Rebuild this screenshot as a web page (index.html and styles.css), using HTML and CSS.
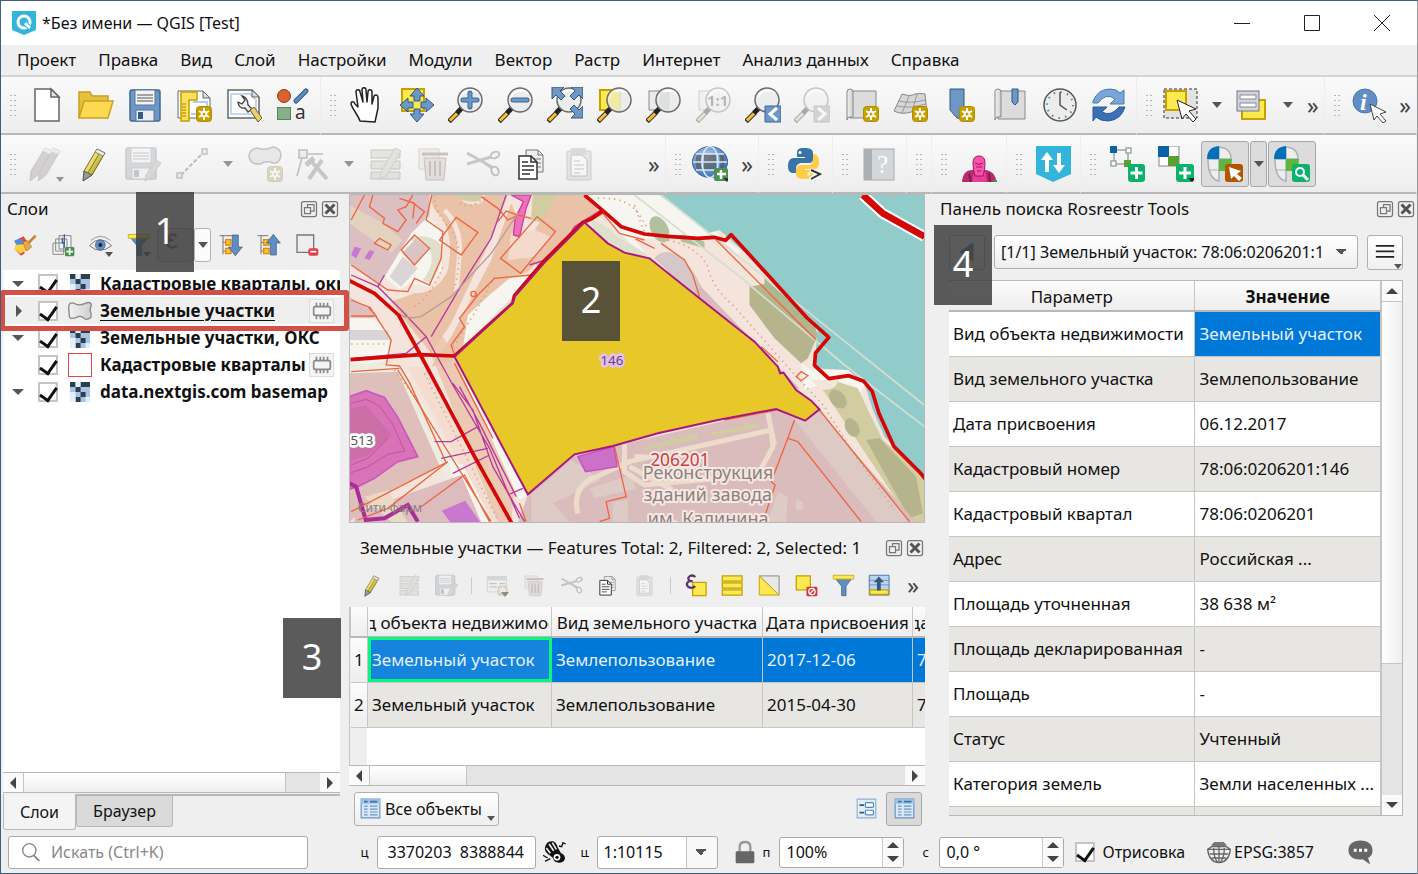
FILE: index.html
```html
<!DOCTYPE html>
<html lang="ru">
<head>
  <meta charset="UTF-8" />
  <meta name="viewport" content="width=device-width, initial-scale=1.0" />
  <title>*Без имени — QGIS [Test]</title>
  <link rel="stylesheet" href="styles.css">
</head>
<body>
  <!-- icon sprite, all icons are 36x36 -->
  <svg class="sprite" aria-hidden="true">
    <defs>
      <linearGradient id="g-pencil" x1="0" y1="0" x2="1" y2="1"><stop offset=".3" stop-color="#fcf08a"/><stop offset=".7" stop-color="#a89a20"/></linearGradient>
      <linearGradient id="g-gray" x1="0" y1="0" x2="1" y2="0"><stop offset="0" stop-color="#f2f2f2"/><stop offset="1" stop-color="#cfcfcf"/></linearGradient>
      <radialGradient id="g-globe" cx=".4" cy=".35" r=".7"><stop offset="0" stop-color="#b8d8f8"/><stop offset="1" stop-color="#2f68b0"/></radialGradient>
    </defs>
    <symbol id="star" viewBox="0 0 16 16"><rect x=".5" y=".5" width="15" height="15" rx="3" fill="#c8a000" stroke="#b08c00"/><path d="M8 2v12M3 5l10 6M13 5L3 11" stroke="#fff" stroke-width="2"/><circle cx="8" cy="8" r="3.3" fill="#fff"/><circle cx="8" cy="8" r="1.5" fill="#c8a000"/></symbol>
    <symbol id="lens" viewBox="0 0 36 36"><path d="M1 34.500L10 25.500" stroke="#333" stroke-width="5"/><path d="M2 33.500L9 26.500" stroke="#fbc02d" stroke-width="3"/><path d="M9 26L14 21" stroke="#222" stroke-width="5"/><circle cx="22" cy="13" r="12" fill="#e9ebeb" fill-opacity=".85" stroke="#6b6b6b" stroke-width="1.500"/><path d="M13 10c3-7 12-8 17-4" stroke="#fff" stroke-width="2" fill="none"/></symbol>
    <symbol id="new" viewBox="0 0 36 36"><path d="M6 2h16l8 8v24H6z" fill="#fff" stroke="#666" stroke-width="1.500"/><path d="M22 2v8h8z" fill="#e4e4e4" stroke="#666" stroke-width="1.500"/></symbol>
    <symbol id="open" viewBox="0 0 36 36"><path d="M1 31V5h11l2 4h16v6" fill="#e8c13c" stroke="#c8a020" stroke-width="1.500"/><path d="M1 31L6 14h29l-5 17z" fill="#fcd94e" stroke="#c8a020" stroke-width="1.500"/></symbol>
    <symbol id="save" viewBox="0 0 36 36"><rect x="3" y="3" width="30" height="31" rx="2" fill="#6d97c4" stroke="#3f6896" stroke-width="1.500"/><rect x="8" y="3" width="20" height="15" fill="#f3f3f3" stroke="#56779c"/><path d="M10 8h16M10 11h16M10 14h16" stroke="#555"/><rect x="9" y="23" width="18" height="11" fill="#eee" stroke="#56779c"/><rect x="11" y="25" width="5" height="7" fill="#355b88"/></symbol>
    <symbol id="layout" viewBox="0 0 36 36"><path d="M1 4h25l7 7v20H1z" fill="#fff" stroke="#666"/><path d="M26 4v7h7z" fill="#ddd" stroke="#666"/><path d="M16 15h14v12H14" fill="none" stroke="#b6cdea" stroke-width="2"/><path d="M4 5h16v8h-8v21H4z" fill="#fce060" stroke="#c4a000" stroke-width="1.500"/><path d="M5 17h4M5 20h4M5 23h4M5 26h4M5 29h4" stroke="#a08000"/><use href="#star" x="19" y="19" width="16" height="16"/></symbol>
    <symbol id="manager" viewBox="0 0 36 36"><path d="M2 3h24l7 7v21H2z" fill="#fff" stroke="#666" stroke-width="1.500"/><path d="M5 7h19l6 6v14H5z" fill="none" stroke="#c5d6f0" stroke-width="2"/><path d="M26 3v7h7z" fill="#ddd" stroke="#666"/><path d="M16 9l3 4-3 4-4-2c0 4 3 7 7 6l3 4 4-3-4-4c0-5-2-8-6-9z" fill="#eee" stroke="#444" stroke-width="1.300"/><path d="M24 23l4-3 8 11-4 4z" fill="#e8ce6e" stroke="#6e5c20"/></symbol>
    <symbol id="style" viewBox="0 0 36 36"><circle cx="9" cy="9" r="6.500" fill="#d9622f" stroke="#8f3e1a"/><path d="M21 14L31 4" stroke="#34587e" stroke-width="5" stroke-linecap="round"/><path d="M21 14L31 4" stroke="#5d8cc0" stroke-width="3" stroke-linecap="round"/><rect x="2.500" y="20.500" width="13" height="12" fill="#87b087" stroke="#5b825b"/><text x="20" y="32" font-size="19" fill="#333">a</text></symbol>
    <symbol id="hand" viewBox="0 0 36 36"><path d="M11 34c-2-6-7-11-9-17 0-3 3-3 4 0l3 3L7 5c0-3 4-3 4 0l3 10-1-12c0-3 4-3 4 0l1 12 1-10c0-3 4-3 4 0v12l2-8c2-2 4-1 4 2v10l-3 14z" fill="#fff" stroke="#222" stroke-width="1.500" stroke-linejoin="round"/></symbol>
    <symbol id="panto" viewBox="0 0 36 36"><path d="M3 2h22v22H3z" fill="#fce94f" stroke="#c4a000" stroke-width="2"/><path d="M18 1l7 8h-4v5h-6V9h-4zM18 35l7-8h-4v-5h-6v5h-4zM1 18l8-7v4h5v6H9v4zM35 18l-8-7v4h-5v6h5v4z" fill="#6d97c4" stroke="#33587f"/></symbol>
    <symbol id="zin" viewBox="0 0 36 36"><use href="#lens"/><path d="M22 6v14M15 13h14" stroke="#3d659a" stroke-width="5" stroke-linecap="round"/><path d="M22 6v14M15 13h14" stroke="#6d97c4" stroke-width="3" stroke-linecap="round"/></symbol>
    <symbol id="zout" viewBox="0 0 36 36"><use href="#lens"/><path d="M15 13h14" stroke="#3d659a" stroke-width="5" stroke-linecap="round"/><path d="M15 13h14" stroke="#6d97c4" stroke-width="3" stroke-linecap="round"/></symbol>
    <symbol id="zfull" viewBox="0 0 36 36"><use href="#lens"/><path d="M5 0h12l-4 4 5 5-4 4-5-5-4 4zM36 0H24l4 4-5 5 4 4 5-5 4 4zM36 31H24l4-4-5-5 4-4 5 5 4-4z" fill="#6d97c4" stroke="#33587f"/></symbol>
    <symbol id="zsel" viewBox="0 0 36 36"><path d="M3 3h20v20H3z" fill="#fce94f" stroke="#c4a000" stroke-width="2"/><use href="#lens"/><path d="M14 5h9v18q-9-1-10-9 0-6 1-9z" fill="#f5e98c" opacity=".7"/></symbol>
    <symbol id="zlay" viewBox="0 0 36 36"><path d="M3 4h20v19H3z" fill="#eaeaea" stroke="#8a8a8a"/><use href="#lens"/><path d="M14 5h9v17h-6q-5-4-4-10z" fill="#d5d8d2" opacity=".6"/></symbol>
    <symbol id="z11" viewBox="0 0 36 36"><path d="M3 4h20v19H3z" fill="#eaeaea" stroke="#8a8a8a"/><use href="#lens"/><text x="11" y="19" font-size="15" font-weight="bold" fill="#444">1:1</text></symbol>
    <symbol id="zlast" viewBox="0 0 36 36"><use href="#lens"/><path d="M20 19h16v16H20z" fill="#6d97c4" stroke="#3d659a"/><path d="M32 21l-7 6 7 6" stroke="#fff" stroke-width="3" fill="none"/></symbol>
    <symbol id="znext" viewBox="0 0 36 36"><use href="#lens"/><path d="M20 19h16v16H20z" fill="#999" stroke="#777"/><path d="M24 21l7 6-7 6" stroke="#fff" stroke-width="3" fill="none"/></symbol>
    <symbol id="mapview" viewBox="0 0 36 36"><path d="M6 4h26v27H6z" fill="#dcdcdc" stroke="#888"/><path d="M3 5q0-3 3-3 3 0 3 3v25H6q-3 0-3 3z" fill="url(#g-gray)" stroke="#888"/><use href="#star" x="19" y="19" width="16" height="16"/></symbol>
    <symbol id="map3d" viewBox="0 0 36 36"><path d="M9 7q9 3 13 0 5-1 10 0l2 20q-10-5-16-2Q9 28 1 24z" fill="#d6d6d6" stroke="#888"/><path d="M6 14q12 3 26-1M4 19q12 3 29-2M16 9L9 26M24 7l-5 18" stroke="#999" fill="none"/><use href="#star" x="19" y="19" width="16" height="16"/></symbol>
    <symbol id="mark" viewBox="0 0 36 36"><path d="M7 2h14v30l-7-1-7-8z" fill="#6d97c4" stroke="#33587f"/><use href="#star" x="16" y="19" width="16" height="16"/></symbol>
    <symbol id="marks" viewBox="0 0 36 36"><path d="M6 4h27v28H6z" fill="#dcdcdc" stroke="#888"/><path d="M3 4q0-2 3-2 3 0 3 3v25H6q-3 0-3 3z" fill="url(#g-gray)" stroke="#888"/><path d="M20 2h6v13l-3 3-3-3z" fill="#6d97c4" stroke="#33587f"/></symbol>
    <symbol id="clock" viewBox="0 0 36 36"><circle cx="18" cy="18" r="16" fill="#ececea" stroke="#555" stroke-width="1.500"/><circle cx="18" cy="18" r="13" fill="none" stroke="#4f7fb5" stroke-width="2" stroke-dasharray="1.500 5.300"/><path d="M18 5v13l7 5" stroke="#555" stroke-width="1.500" fill="none"/></symbol>
    <symbol id="refresh" viewBox="0 0 36 36"><path d="M2 14Q7 2 19 2q7 0 10 4l4-3v14H19l5-5q-9-7-17 4H2z" fill="#7aa5d8" stroke="#4a7ab0"/><path d="M34 20q-4 13-17 14-8 0-12-4l-3 4V20h14l-5 5q9 5 17-5z" fill="#3a70b8" stroke="#2b5a96"/></symbol>
    <symbol id="select" viewBox="0 0 36 36"><path d="M1 2h33v29H1z" fill="#e2e2e2" stroke="#333" stroke-dasharray="3 2"/><path d="M3 4h20v19H3z" fill="#fce94f" stroke="#c4a000" stroke-width="2"/><path d="M14 13l5 19 4-5 7 8 3-3-7-8 7-2z" fill="#fff" stroke="#222"/></symbol>
    <symbol id="form" viewBox="0 0 36 36"><path d="M8 13h23v19H8z" fill="#fce94f" stroke="#c4a000" stroke-width="2"/><rect x="3" y="4" width="22" height="20" fill="#cfd5da" stroke="#778"/><path d="M6 8h16v4H6zM6 16h16v4H6z" fill="#fff" stroke="#889"/></symbol>
    <symbol id="info" viewBox="0 0 36 36"><circle cx="14" cy="14" r="12" fill="#5f8dc4" stroke="#4a78ae"/><text x="9" y="23" font-size="24" font-family="Liberation Serif, serif" font-style="italic" font-weight="bold" fill="#fff">i</text><path d="M19 17l4 16 3-4 6 7 3-2-6-7 6-2z" fill="#fff" stroke="#444"/></symbol>
    <symbol id="pencil" viewBox="0 0 36 36"><path d="M7 25L20 3l8 4-13 22-8 5z" fill="url(#g-pencil)" stroke="#6e6820"/><path d="M20 3l8 4-2 3-8-4z" fill="#eee" stroke="#888"/><path d="M7 25l8 4-9 6z" fill="#999" stroke="#555"/><path d="M22 8L11 27" stroke="#877d1a"/></symbol>
    <symbol id="pencils" viewBox="0 0 36 36"><path d="M3 25L17 2l7 3-14 24-8 6zM12 25L25 2l7 3-14 24-8 6z" fill="#a08f8a" stroke="#777"/><path d="M17 2l7 3-2 3-7-3zM25 2l7 3-2 3-7-3z" fill="#ddd"/></symbol>
    <symbol id="savee" viewBox="0 0 36 36"><g opacity=".8"><use href="#save" x="-2" y="-1"/></g><path d="M21 29l10-15 5 3-10 15-6 3z" fill="#b6a09a" stroke="#888"/></symbol>
    <symbol id="line" viewBox="0 0 36 36"><path d="M7 29L29 7" stroke="#555" stroke-width="2" stroke-dasharray="4 2"/><path d="M3 27h5v5H3zM28 3h5v5h-5z" fill="#ddd" stroke="#666" stroke-width="1.500"/></symbol>
    <symbol id="poly" viewBox="0 0 36 36"><path d="M2 11q0-8 8-9 7 3 16-1 8 1 8 9-2 8-8 7-6-3-13 1-9 1-11-7z" fill="#ccd0cc" stroke="#666" stroke-width="1.500"/><use href="#star" x="20" y="20" width="16" height="16"/></symbol>
    <symbol id="vertex" viewBox="0 0 36 36"><path d="M8 8h20M8 8L2 30" stroke="#555" stroke-width="1.500"/><path d="M4 4h8v8H4z" fill="#ddd" stroke="#555" stroke-width="1.500"/><path d="M14 33l13-19M16 15l16 18" stroke="#777" stroke-width="4"/><path d="M11 19l8-7" stroke="#777" stroke-width="5"/></symbol>
    <symbol id="tabedit" viewBox="0 0 36 36"><path d="M3 4h29v8H3zM3 15h29v8H3zM3 26h29v7H3z" fill="#c8c8a8" stroke="#77775a"/><path d="M13 26L27 2l6 3-14 24-7 4z" fill="#cdbdb8" stroke="#888"/></symbol>
    <symbol id="trash" viewBox="0 0 36 36"><path d="M3 3h20v20H3z" fill="#ddddc0" stroke="#99997a"/><path d="M8 12h22l-2 22H10z" fill="#e0b0b0" stroke="#a05858"/><path d="M6 8h26" stroke="#a05858" stroke-width="3"/><path d="M14 15v15M19 15v15M24 15v15" stroke="#a05858" stroke-width="2"/></symbol>
    <symbol id="cut" viewBox="0 0 36 36"><path d="M2 7l25 14M2 18l24-7" stroke="#777" stroke-width="3"/><path d="M17 15l10 8" stroke="#777" stroke-width="2"/><ellipse cx="30" cy="9" rx="4.500" ry="3" transform="rotate(-25 30 9)" fill="none" stroke="#8a5a5a" stroke-width="2"/><ellipse cx="30" cy="25" rx="3.500" ry="4.500" transform="rotate(-25 30 25)" fill="none" stroke="#8a5a5a" stroke-width="2"/></symbol>
    <symbol id="copy" viewBox="0 0 36 36"><path d="M13 4h12l5 5v17H13z" fill="#eee" stroke="#777"/><path d="M25 4v5h5" fill="none" stroke="#777"/><path d="M21 13h7M21 17h7M21 21h7" stroke="#777"/><path d="M6 10h12l6 6v17H6z" fill="#fff" stroke="#333" stroke-width="1.500"/><path d="M18 10v6h6" fill="none" stroke="#333" stroke-width="1.500"/><path d="M9 16h6M9 20h12M9 24h12M9 28h8" stroke="#333" stroke-width="1.300"/></symbol>
    <symbol id="paste" viewBox="0 0 36 36"><rect x="6" y="5" width="24" height="29" rx="1" fill="#cfc8b8" stroke="#888"/><rect x="10" y="2" width="15" height="6" fill="#aaa"/><path d="M10 9h11l5 5v16H10z" fill="#fff" stroke="#666"/><path d="M13 15h6M13 19h10M13 23h10M13 27h6" stroke="#777"/></symbol>
    <symbol id="globe" viewBox="0 0 36 36"><ellipse cx="18" cy="16" rx="17.500" ry="15.500" fill="url(#g-globe)" stroke="#3465a4"/><path d="M5 8q-3 8 0 16h5q-2-8 0-16zM12 8v16h12V8zM27 8q3 8 0 16h4q3-8 0-16z" fill="#555" opacity=".7"/><path d="M1 16h34M4 8h28M4 24h28" stroke="#dde8f5" stroke-width="1.500"/><ellipse cx="18" cy="16" rx="8" ry="15.500" fill="none" stroke="#dde8f5" stroke-width="1.500"/><rect x="22" y="22" width="14" height="13" rx="2" fill="#4d9152"/><path d="M29 24v9M25 28h9" stroke="#fff" stroke-width="2.500"/><path d="M31 32h7l-3 4z" fill="#333"/></symbol>
    <symbol id="python" viewBox="0 0 36 36"><path d="M17 2c-6 0-7 2-7 5v4h8v1H7c-4 0-6 3-6 8s2 7 5 7h3v-5c0-3 3-5 6-5h7c3 0 4-2 4-4V7c0-4-4-5-9-5z" fill="#3874a8"/><path d="M18 33c6 0 8-2 8-5v-4h-8v-1h9c4 0 5-3 5-7 0-5-2-8-5-8h-1v6c0 3-2 5-5 5h-7c-3 0-5 2-5 5v4c0 4 3 5 9 5z" fill="#fdce45"/><circle cx="13" cy="6.500" r="1.500" fill="#fff"/><circle cx="22" cy="28" r="1.500" fill="#fff"/><path d="M23 24l9 4-9 5" stroke="#fff" stroke-width="4" fill="none"/><path d="M24 24l9 4-9 5" stroke="#333" stroke-width="2" fill="none"/></symbol>
    <symbol id="help" viewBox="0 0 36 36"><rect x="3" y="3" width="30" height="31" fill="#d3d7da" stroke="#aaa"/><rect x="3" y="3" width="8" height="31" fill="#aab0b4"/><text x="16" y="27" font-size="25" font-family="Liberation Serif, serif" fill="#fff">?</text></symbol>
    <symbol id="pink" viewBox="0 0 36 36"><path d="M1 36q1-12 10-12h14q10 2 10 12z" fill="#b82a70"/><path d="M11 36l2-12h11l2 12z" fill="#e53d98"/><path d="M12 17q0-7 6-7t6 7q0 7-2 13h-8q-2-6-2-13z" fill="#ff4fae" stroke="#8d2158"/><path d="M14 17q4 3 8 0M15 21h6M16 25h4" stroke="#8d2158" fill="none"/><path d="M8 28l2 8M28 27l1 9" stroke="#7a1c4c" stroke-width="2"/><path d="M32 34h4v2h-4z" fill="#30a030"/></symbol>
    <symbol id="ngsync" viewBox="0 0 36 36"><path d="M1 0h35v28l-18 8-17-8z" fill="#33b5db"/><path d="M12 26V9M24 7v17" stroke="#fff" stroke-width="4"/><path d="M6 14l6-8 6 8zM18 19l6 8 6-8z" fill="#fff"/></symbol>
    <symbol id="addvec" viewBox="0 0 36 36"><path d="M5 4h14v14H5z" fill="none" stroke="#9aa6aa" stroke-width="1.500"/><path d="M17 2h5v5h-5zM2 15h5v5H2z" fill="#fff" stroke="#9aa6aa" stroke-width="1.500"/><path d="M1 0h7v7H1z" fill="#0b62a4"/><path d="M15 14h7v7h-7z" fill="#56a132"/><rect x="19" y="18" width="17" height="18" rx="3" fill="#0cb26b"/><path d="M27.500 21v12M21.500 27h12" stroke="#fff" stroke-width="3"/></symbol>
    <symbol id="addras" viewBox="0 0 36 36"><path d="M1 0h20v20H1z" fill="#fff" stroke="#a8b0b3" stroke-width="1.500"/><path d="M0 0h11v11H0z" fill="#0b62a4"/><path d="M10 10h11v10H10z" fill="#56a132"/><rect x="18" y="18" width="18" height="18" rx="3" fill="#0cb26b"/><path d="M27 21v12M21 27h12" stroke="#fff" stroke-width="3"/><path d="M30 32h8l-4 4z" fill="#222"/></symbol>
    <symbol id="pie" viewBox="0 0 36 36"><path d="M12 13V1q12 1 12 12zM12 13v22Q1 33 1 13z" fill="#eee" stroke="#a8b3b6" stroke-width="1.500"/><path d="M1 24h11" stroke="#a8b3b6"/><path d="M12 0v13H0Q0 1 12 0z" fill="#0070b8"/><path d="M12 13h13q0 8-5 12h-8z" fill="#5cb83c"/></symbol>
    <symbol id="idpie" viewBox="0 0 36 36"><use href="#pie"/><rect x="18" y="18" width="18" height="18" rx="3" fill="#b25400"/><path d="M22 21l2 12 3-3 5 5 3-3-5-4 4-3z" fill="#fff"/></symbol>
    <symbol id="spie" viewBox="0 0 36 36"><use href="#pie"/><rect x="18" y="18" width="18" height="18" rx="3" fill="#0cb26b"/><circle cx="26" cy="26" r="4" fill="none" stroke="#fff" stroke-width="2"/><path d="M29 29l5 5" stroke="#fff" stroke-width="3"/></symbol>
    <symbol id="brush" viewBox="0 0 36 36"><path d="M2 12l14-7 10 16-13 9z" fill="#e8443c"/><path d="M2 24l8-4 8 10-6 4z" fill="#e8443c"/><path d="M2 12l8-4 8 6-12 6z" fill="#4d8ce0"/><path d="M3 18l18-2 4 7-14 8-8-6z" fill="#fbd23c"/><path d="M15 14l6-3 7 10-8 6z" fill="#e8a84c" stroke="#a86c20"/><path d="M23 15L34 4" stroke="#c98530" stroke-width="4"/></symbol>
    <symbol id="addgrp" viewBox="0 0 36 36"><path d="M3 15h16v17H3zM7 9h17v18H7zM12 4h18v20H12z" fill="#f2f2f2" stroke="#888" stroke-width="1.500"/><path d="M20 10v12M20 2v10q0 3-3 3v-8" stroke="#3c6898" stroke-width="2" fill="none"/><rect x="21" y="21" width="14" height="14" rx="2" fill="#4d9152"/><path d="M28 23v10M23 28h10" stroke="#fff" stroke-width="2.500"/></symbol>
    <symbol id="eye" viewBox="0 0 36 36"><path d="M1 19Q16 1 34 19 16 33 1 19z" fill="#f2f2f2" stroke="#777" stroke-width="1.500"/><circle cx="17" cy="18" r="7.500" fill="#5f8dc4" stroke="#3a628c"/><circle cx="17" cy="18" r="3" fill="#222"/><path d="M3 11Q17-1 32 11" stroke="#999" fill="none" stroke-width="1.500"/></symbol>
    <symbol id="filter" viewBox="0 0 36 36"><path d="M2 3h32L22 19v15h-7V19z" fill="#5f8dc4" stroke="#34587e"/><path d="M2 2h32v6H2z" fill="#fce94f" stroke="#c4a000"/></symbol>
    <symbol id="expand" viewBox="0 0 36 36"><path d="M1 4h24M6 4v28M6 14h4M6 27h4" stroke="#777" stroke-width="1.500" fill="none"/><path d="M10 10h8v8h-8zM10 23h8v8h-8z" fill="#fbc02d" stroke="#e08a10" stroke-width="2"/><path d="M20 3h9v18h6L24.500 34 14 21h6z" fill="#5f8dc4" stroke="#34587e"/></symbol>
    <symbol id="collapse" viewBox="0 0 36 36"><path d="M1 4h16M6 4v28M6 14h4M6 27h4" stroke="#777" stroke-width="1.500" fill="none"/><path d="M10 10h8v8h-8zM10 23h8v8h-8z" fill="#fbc02d" stroke="#e08a10" stroke-width="2"/><path d="M20 33h9V15h6L24.500 2 14 15h6z" fill="#5f8dc4" stroke="#34587e"/></symbol>
    <symbol id="remove" viewBox="0 0 36 36"><path d="M3 3h25v26H3z" fill="#eee" stroke="#777" stroke-width="2"/><rect x="20" y="23" width="15" height="11" rx="3" fill="#e8404a"/><path d="M23 28h9" stroke="#fff" stroke-width="2.500"/></symbol>
    <symbol id="tabadd" viewBox="0 0 36 36"><path d="M2 4h30v24H2z" fill="#eee" stroke="#777"/><path d="M2 4h30v6H2z" fill="#9aa"/><path d="M5 15h12M5 20h12M21 15h9" stroke="#777" stroke-width="2"/><use href="#star" x="18" y="18" width="16" height="16"/></symbol>
    <symbol id="eps" viewBox="0 0 36 36"><path d="M12 13h21v21H12z" fill="#fce94f" stroke="#c4a000" stroke-width="2"/><path d="M16 5q-3-4-8-2-6 4 0 8h4-5q-7 4-2 9 6 4 11-1" fill="none" stroke="#5c3566" stroke-width="3.500"/></symbol>
    <symbol id="epsf" viewBox="0 0 36 36"><path d="M20 5q-4-4-9-2-6 4 1 8h4-5q-8 4-2 9 6 4 12-1" fill="none" stroke="#8c4a96" stroke-width="3.500"/><path d="M22 22h13v13h-4v-8h-5v8h-4z" fill="#ddd"/></symbol>
    <symbol id="selall" viewBox="0 0 36 36"><path d="M2 3h31v8H2zM2 14h31v8H2zM2 25h31v8H2z" fill="#fce94f" stroke="#c4a000" stroke-width="2"/></symbol>
    <symbol id="invert" viewBox="0 0 36 36"><path d="M2 3h31v30z" fill="#e8e8e8" stroke="#888" stroke-width="1.500"/><path d="M2 3v30h31z" fill="#fce94f" stroke="#c4a000" stroke-width="1.500"/></symbol>
    <symbol id="desel" viewBox="0 0 36 36"><path d="M2 3h22v22H2z" fill="#fce94f" stroke="#c4a000" stroke-width="2"/><rect x="18" y="20" width="17" height="15" rx="2" fill="#d8323a"/><circle cx="26.500" cy="27.500" r="5" fill="none" stroke="#fff" stroke-width="2"/><path d="M23 31l7-7" stroke="#fff" stroke-width="2"/></symbol>
    <symbol id="totop" viewBox="0 0 36 36"><path d="M2 2h31v31H2z" fill="#b9d4ee" stroke="#4a78ae" stroke-width="1.500"/><path d="M2 10h31M2 17h31" stroke="#4a78ae"/><path d="M3 25h29v7H3z" fill="#fce94f" stroke="#c4a000" stroke-width="2"/><path d="M17 4l8 9h-5v13h-6V13H9z" fill="#34587e"/></symbol>
    <symbol id="table" viewBox="0 0 36 36"><path d="M2 2h32v32H2z" fill="#d8e8f6" stroke="#6595c5" stroke-width="2"/><path d="M2 2h32v8H2z" fill="#9cc6e8"/><path d="M7 6h6M17 6h13" stroke="#446fa0" stroke-width="3"/><path d="M7 14h6M17 14h13M7 19h6M17 19h13M7 24h6M17 24h13M7 29h6M17 29h13" stroke="#6595c5" stroke-width="2"/></symbol>
    <symbol id="formv" viewBox="0 0 36 36"><path d="M2 2h32v32H2z" fill="#e4ecf4" stroke="#8fb0d4" stroke-width="2"/><path d="M6 12h8M6 25h8" stroke="#345878" stroke-width="3"/><rect x="16" y="8" width="14" height="8" rx="2" fill="#fff" stroke="#4a88c8" stroke-width="2"/><rect x="16" y="21" width="14" height="8" rx="2" fill="#fff" stroke="#4a88c8" stroke-width="2"/></symbol>
    <symbol id="float" viewBox="0 0 36 36"><rect x="3" y="3" width="30" height="30" rx="4" fill="none" stroke="#777" stroke-width="2.500"/><path d="M15 9h13v13H15z" fill="none" stroke="#777" stroke-width="2.500"/><path d="M9 15h12v12H9z" fill="#efefef" stroke="#777" stroke-width="2.500"/></symbol>
    <symbol id="close" viewBox="0 0 36 36"><rect x="3" y="3" width="30" height="30" rx="4" fill="none" stroke="#777" stroke-width="2.500"/><path d="M9 9l18 18M27 9L9 27" stroke="#555" stroke-width="6"/></symbol>
    <symbol id="checker" viewBox="0 0 36 36"><path d="M0 0h36v36H0z" fill="#a9c4e2"/><path d="M0 0h10v9H0zM19 0h17v9H19zM10 9h9v9h-9zM19 18h9v9h-9zM10 27h9v9h-9z" fill="#2c3e50"/><path d="M10 0h9v9h-9zM0 18h10v18H0zM28 27h8v9h-8z" fill="#e4eef8"/></symbol>
    <symbol id="shape" viewBox="0 0 36 36"><path d="M1 13Q1 5 8 6q8 5 17 1 8-4 10 1-1 5-2 9 3 7 1 11-7 5-11 0-5-4-11 0Q3 31 2 26z" fill="url(#g-gray)" stroke="#888" stroke-width="2"/></symbol>
    <symbol id="chip" viewBox="0 0 36 36"><rect x="3" y="10" width="30" height="16" rx="3" fill="#f4f4f4" stroke="#888" stroke-width="3"/><path d="M8 9V3M15 9V3M21 9V3M28 9V3M8 27v6M15 27v6M21 27v6M28 27v6" stroke="#888" stroke-width="3"/></symbol>
    <symbol id="search" viewBox="0 0 36 36"><circle cx="15" cy="15" r="12" fill="none" stroke="#888" stroke-width="2.500"/><path d="M23 24l10 10" stroke="#888" stroke-width="3.500"/></symbol>
    <symbol id="bug" viewBox="0 0 36 36"><path d="M4 8q3-7 11-6 5 2 7 9l5 9q6 2 6 8-2 6-9 6-8 0-9-7L6 20Q1 15 4 8z" fill="#111"/><path d="M9 6l7 10M14 4l6 10M5 12l6 8" stroke="#eee" stroke-width="2.500"/><circle cx="21" cy="26" r="5" fill="#fff"/><circle cx="21" cy="26" r="2.500" fill="#111"/><path d="M0 23l7 4M24 9l4 1 2-6 4 2M3 32l8-4" stroke="#111" stroke-width="2" fill="none"/></symbol>
    <symbol id="lock" viewBox="0 0 36 36"><path d="M10 18v-8q0-7 8-7t8 7v8" fill="none" stroke="#999" stroke-width="3.500"/><rect x="4" y="17" width="28" height="18" rx="2" fill="#666"/></symbol>
    <symbol id="crs" viewBox="0 0 36 36"><path d="M11 3h14l5 5q-12 6-24 0z" fill="#777"/><path d="M1 14h34Q33 33 18 34 3 33 1 14zM1 14l6-4h22l6 4" fill="none" stroke="#666" stroke-width="2"/><path d="M4 21h28M7 27h22M18 10v24M10 12q0 14 6 22M26 12q0 14-6 22" stroke="#666" stroke-width="2" fill="none"/></symbol>
    <symbol id="bubble" viewBox="0 0 36 36"><path d="M18 2c10 0 16 5 16 13 0 6-3 9-6 10l3 9-10-7C9 29 2 23 2 15 2 7 8 2 18 2z" fill="#666"/><path d="M9 13h4v4H9zM16 13h4v4h-4zM23 13h4v4h-4z" fill="#fff"/></symbol>
    <symbol id="burger" viewBox="0 0 36 36"><path d="M3 8h30M3 17h30M3 26h30" stroke="#222" stroke-width="3"/></symbol>
    <symbol id="back" viewBox="0 0 36 36"><path d="M28 3v30L6 18z" fill="#5f7fa8" stroke="#34587e"/></symbol>
  </svg>

  <div class="window">
    <header class="titlebar">
      <svg class="logo" viewBox="0 0 24 24"><path d="M0 0h24v19l-12 5-12-5z" fill="#33b5db"/><circle cx="12" cy="11" r="6" fill="none" stroke="#fff" stroke-width="3"/><path d="M12 11l7 7" stroke="#33b5db" stroke-width="5"/><path d="M13 12l5 5" stroke="#fff" stroke-width="3"/></svg>
      <h1>*Без имени — QGIS [Test]</h1>
      <div class="win-buttons">
        <button aria-label="Свернуть"><svg viewBox="0 0 16 16"><path d="M0 8.500h16"/></svg></button>
        <button aria-label="Развернуть"><svg viewBox="0 0 16 16"><path d="M.5.5h15v15H.5z"/></svg></button>
        <button aria-label="Закрыть"><svg viewBox="0 0 16 16"><path d="M0 0l16 16M16 0L0 16"/></svg></button>
      </div>
    </header>

    <nav class="menu">
      <button>Проект</button><button>Правка</button><button>Вид</button><button>Слой</button><button>Настройки</button><button>Модули</button><button>Вектор</button><button>Растр</button><button>Интернет</button><button>Анализ данных</button><button>Справка</button>
    </nav>

    <div class="toolbar first">
      <div class="group">
        <i class="grip"></i>
        <button aria-label="Создать"><svg><use href="#new"/></svg></button>
        <button aria-label="Открыть"><svg><use href="#open"/></svg></button>
        <button aria-label="Сохранить"><svg><use href="#save"/></svg></button>
        <button aria-label="Новый макет"><svg><use href="#layout"/></svg></button>
        <button aria-label="Менеджер макетов"><svg><use href="#manager"/></svg></button>
        <button aria-label="Стили"><svg><use href="#style"/></svg></button>
      </div>
      <div class="group">
        <i class="grip"></i>
        <button aria-label="Прокрутка"><svg><use href="#hand"/></svg></button>
        <button aria-label="К выделению"><svg><use href="#panto"/></svg></button>
        <button aria-label="Увеличить"><svg><use href="#zin"/></svg></button>
        <button aria-label="Уменьшить"><svg><use href="#zout"/></svg></button>
        <button aria-label="Полный охват"><svg><use href="#zfull"/></svg></button>
        <button aria-label="Увеличить до выделения"><svg><use href="#zsel"/></svg></button>
        <button aria-label="Увеличить до слоя"><svg><use href="#zlay"/></svg></button>
        <button aria-label="Фактический размер" disabled><svg><use href="#z11"/></svg></button>
        <button aria-label="Предыдущий охват"><svg><use href="#zlast"/></svg></button>
        <button aria-label="Следующий охват" disabled><svg><use href="#znext"/></svg></button>
        <button aria-label="Новый вид карты"><svg><use href="#mapview"/></svg></button>
        <button aria-label="Новый 3D вид"><svg><use href="#map3d"/></svg></button>
        <button aria-label="Новая закладка"><svg><use href="#mark"/></svg></button>
        <button aria-label="Закладки"><svg><use href="#marks"/></svg></button>
        <button aria-label="Время"><svg><use href="#clock"/></svg></button>
        <button aria-label="Обновить"><svg><use href="#refresh"/></svg></button>
      </div>
      <div class="group tight">
        <i class="grip"></i>
        <button aria-label="Выделить"><svg><use href="#select"/></svg></button>
        <button class="drop" aria-label="Ещё"></button>
        <button aria-label="Выделить по значению"><svg><use href="#form"/></svg></button>
        <button class="drop" aria-label="Ещё"></button>
        <button class="more">»</button>
      </div>
      <div class="group tight">
        <i class="grip"></i>
        <button aria-label="Определить"><svg><use href="#info"/></svg></button>
        <button class="more">»</button>
      </div>
    </div>

    <div class="toolbar second">
      <div class="group tight">
        <i class="grip"></i>
        <button class="has-arrow off" aria-label="Текущие правки"><svg><use href="#pencils"/></svg></button>
        <button aria-label="Режим редактирования"><svg><use href="#pencil"/></svg></button>
        <button aria-label="Сохранить правки" disabled><svg><use href="#savee"/></svg></button>
        <button aria-label="Оцифровка" disabled><svg><use href="#line"/></svg></button>
        <button class="drop" aria-label="Ещё" disabled></button>
        <button aria-label="Добавить полигон" disabled><svg><use href="#poly"/></svg></button>
        <button aria-label="Вершины" disabled><svg><use href="#vertex"/></svg></button>
        <button class="drop" aria-label="Ещё" disabled></button>
        <button aria-label="Изменить атрибуты" disabled><svg><use href="#tabedit"/></svg></button>
        <button aria-label="Удалить" disabled><svg><use href="#trash"/></svg></button>
        <button aria-label="Вырезать" disabled><svg><use href="#cut"/></svg></button>
        <button aria-label="Копировать"><svg><use href="#copy"/></svg></button>
        <button aria-label="Вставить" disabled><svg><use href="#paste"/></svg></button>
        <button class="more last">»</button>
      </div>
      <div class="group tight">
        <i class="grip"></i>
        <button aria-label="Добавить слой"><svg><use href="#globe"/></svg></button>
        <button class="more">»</button>
      </div>
      <div class="group">
        <i class="grip"></i>
        <button aria-label="Консоль Python"><svg><use href="#python"/></svg></button>
      </div>
      <div class="group">
        <i class="grip"></i>
        <button aria-label="Справка"><svg><use href="#help"/></svg></button>
      </div>
      <div class="group tight"><i class="grip"></i></div>
      <div class="group">
        <i class="grip"></i>
        <button aria-label="Модуль"><svg><use href="#pink"/></svg></button>
      </div>
      <div class="group">
        <i class="grip"></i>
        <button aria-label="NextGIS Connect"><svg><use href="#ngsync"/></svg></button>
      </div>
      <div class="group g-ros">
        <i class="grip"></i>
        <button aria-label="Добавить вектор"><svg><use href="#addvec"/></svg></button>
        <button aria-label="Добавить растр"><svg><use href="#addras"/></svg></button>
        <div class="pressed-set">
          <button class="pressed" aria-label="Идентификация"><svg><use href="#idpie"/></svg></button>
          <button class="pressed drop" aria-label="Ещё"></button>
          <button class="pressed" aria-label="Поиск"><svg><use href="#spie"/></svg></button>
        </div>
      </div>
    </div>

    <main class="main">
      <section class="dock layers">
        <div class="dock-title"><h2>Слои</h2><button aria-label="Открепить"><svg><use href="#float"/></svg></button><button aria-label="Закрыть панель"><svg><use href="#close"/></svg></button></div>
        <div class="layer-tools">
          <button aria-label="Стиль"><svg><use href="#brush"/></svg></button>
          <button aria-label="Добавить группу"><svg><use href="#addgrp"/></svg></button>
          <button class="has-arrow" aria-label="Видимость"><svg><use href="#eye"/></svg></button>
          <button class="has-arrow" aria-label="Фильтр"><svg><use href="#filter"/></svg></button>
          <div class="split"><button aria-label="Фильтр по выражению"><svg><use href="#epsf"/></svg></button><button class="drop" aria-label="Ещё"></button></div>
          <button aria-label="Развернуть всё"><svg><use href="#expand"/></svg></button>
          <button aria-label="Свернуть всё"><svg><use href="#collapse"/></svg></button>
          <button aria-label="Удалить слой"><svg><use href="#remove"/></svg></button>
        </div>
        <div class="tree">
          <div class="node"><i class="tri down"></i><input type="checkbox" id="l1" checked><svg class="thumb"><use href="#checker"/></svg><label for="l1">Кадастровые кварталы, округа</label></div>
          <div class="node current"><i class="tri right"></i><input type="checkbox" id="l2" checked><svg class="thumb wide"><use href="#shape"/></svg><label for="l2">Земельные участки</label><button class="mem" aria-label="Временный слой"><svg><use href="#chip"/></svg></button></div>
          <div class="node"><i class="tri down"></i><input type="checkbox" id="l3" checked><svg class="thumb"><use href="#checker"/></svg><label for="l3">Земельные участки, ОКС</label></div>
          <div class="node"><i class="tri"></i><input type="checkbox" id="l4" checked><span class="thumb outline"></span><label for="l4">Кадастровые кварталы</label><button class="mem" aria-label="Временный слой"><svg><use href="#chip"/></svg></button></div>
          <div class="node"><i class="tri down"></i><input type="checkbox" id="l5" checked><svg class="thumb"><use href="#checker"/></svg><label for="l5">data.nextgis.com basemap</label></div>
        </div>
        <div class="hscroll"><button class="arrow left" aria-label="Влево"></button><div class="bar wide-bar"></div><div class="track"></div><button class="arrow right" aria-label="Вправо"></button></div>
        <div class="tabs"><button class="active">Слои</button><button>Браузер</button></div>
        <div class="highlight"></div>
        <div class="badge b1">1</div>
        <div class="badge b3">3</div>
      </section>

      <section class="center">
        <div class="map">
          <svg viewBox="15 15 1725 981" preserveAspectRatio="xMidYMid slice">
            <rect x="0" y="0" width="1760" height="1010" fill="#f5e4dc"/>
            <!-- land use -->
            <path d="M15 15h240v60L150 230l-50 50-85-60z" fill="#dbbfc1"/>
            <path d="M15 45l100 55 60 50-35 40-125-90z" fill="#e4d2c0"/>
            <path d="M250 80l50 50-10 110-35 50-60-10-30 20-45-40 80-130z" fill="#f6f5ef"/>
            <path d="M200 140q90-10 95 50-5 50-40 90l-20-10q40-50 20-90-15-25-60-30z" fill="#e0dfcb"/>
            <path d="M215 145l38 30-45 50-35-35z" fill="#dbc5c2"/>
            <path d="M175 200l45 35-50 55-35-30z" fill="#dbd5d6"/>
            <path d="M15 330l115 90 10 90-125 20z" fill="#f6f5ef"/>
            <path d="M15 320l80 50-10 15-70-2z" fill="#ddc0bd"/>
            <path d="M15 420h115l10 30H15z" fill="#d8d5d6"/>
            <path d="M15 545h145l150 270-200 100-95 80z" fill="#dfbfb9"/>
            <path d="M15 520l155 5 270 471H360L160 545l-145 5z" fill="#edece1"/>
            <path d="M190 530h60l220 466h-30z" fill="#f4ddd0"/>
            <path d="M310 810l45 15 90 170h-75z" fill="#f6f5ef"/>
            <path d="M30 970l320-115 60 141H30z" fill="#dcbcbc"/>
            <path d="M60 920l70-20 60 96h-50z" fill="#ead9c4"/>
            <path d="M260 15h90q0 30 40 28 30 0 30-28h70l-50 130-120 255-60 90-60-75-60-80 70-25q70 0 100-70 20-100-20-160-35-30-30-65z" fill="#eac2a8"/>
            <path d="M235 430l60 10 40 60 175 400-10 96h-40z" fill="#eac2a8" opacity=".8"/>
            <path d="M330 505l25 10 195 400-25 15z" fill="#f6f5ef"/>
            <path d="M300 60q50 50 45 130l-10 120" fill="none" stroke="#f6e4da" stroke-width="14"/>
            <path d="M340 15h75q-5 20-30 20-35 0-45-20z" fill="#d1cda0"/>
            <path d="M500 40l-60 170-120 230-60 90 60-15 180-250 50-20 230-230h-60L560 210l-60-30 20-90z" fill="#eac2a8"/>
            <path d="M545 15h100l-60 130-50-10z" fill="#f5e4dc"/>
            <path d="M565 15h95l-60 85-40-10z" fill="#d1cda0"/>
            <path d="M640 15h80l50 45-60 40-130 130-50-50z" fill="#eac2a8"/>
            <path d="M500 130l70-10 50 20-50 60-80 10z" fill="#f3dacb"/>
            <path d="M560 255l-65 10-60 50-65 60-15 100 150-130z" fill="#f6f5ef"/>
            <path d="M330 495l180-180 20 10-175 165z" fill="#e0dfcb"/>
            <path d="M720 15h250l220 170-170 120-200-180z" fill="#f6f5ef"/>
            <path d="M740 90q40 10 80 50l100 60-70-10-100-60z" fill="#dfe0cc"/>
            <!-- embankment -->
            <path d="M870 150l250-15 300 300-50 80 80 60 110 50 60 130 110 130v100h-60L1160 430 920 210z" fill="#f5e4dc"/>
            <path d="M930 205q25-30 70-10 40 30 70 95l220 230 75 75-20 10-110-150-230-180z" fill="#d9bcbc"/>
            <path d="M935 205q25-30 65-10 50 40 65 100l-30 20z" fill="#d6c7c9"/>
            <!-- river -->
            <path d="M945 15l85 65 60 50 35-10 145 130 150 160-10 125 100 5 50 40 25 80 35 80 120 125V15z" fill="#91cccb"/>
            <path d="M1370 520l30 20 110 0 50 45-10 20-110-25-60 20z" fill="#f6f5ef"/>
            <path d="M1420 590l60-15 60 20 35 75 40 80 125 110v136h-40l-200-300-60-90z" fill="#d1cda0"/>
            <path d="M1400 570q50 0 80 0 0 30-50 30z" fill="#f5e4dc"/>
            <path d="M1215 290l55-10 140 125 10 30-30 70-20 15-80-75-75-100z" fill="#b5b48d"/>
            <path d="M1260 265l155 140-10 20-145-140z" fill="#a9b98f"/>
            <ellipse cx="945" cy="118" rx="26" ry="42" transform="rotate(-28 945 118)" fill="#b1c19f"/>
            <path d="M1005 135q30-5 75 20v20l-70-20z" fill="#b1c19f"/>
            <ellipse cx="1480" cy="627" rx="32" ry="22" transform="rotate(50 1480 627)" fill="#b5b48d"/>
            <ellipse cx="1523" cy="713" rx="30" ry="20" transform="rotate(60 1523 713)" fill="#b5b48d"/>
            <path d="M1565 750l40-5 110 115 20 110-40 15z" fill="#b5b48d"/>
            <!-- factory blocks -->
            <path d="M550 915l140-120 605-138 130 10 290 330H520z" fill="#dbbcbd"/>
            <path d="M1350 690l75-30 270 335h-100z" fill="#ddcac5"/>
            <path d="M560 915l120-105 90 60-145 70 50 56H560z" fill="#dfcbc6"/>
            <path d="M900 770l160-40v18l-158 32zM1098 728l140-30 8 14-145 26z" fill="#d1cda0"/>
            <path d="M735 895l135-42v45l-120 25zM805 935l45-5v66h-45z" fill="#dfcbc6"/>
            <path d="M1300 905l30 15-5 75h-55zM1355 930l20 5v25h-20z" fill="#dfcbc6"/>
            <path d="M700 970q-20-80 55-110l100-45 425-95 5 50-45 85-340 30-60-40V760M855 830l130 70M870 800h40M1270 670l20 95" fill="none" stroke="#eddccb" stroke-width="15"/>
            <!-- magenta buildings -->
            <path d="M15 620l50-18 55 20 40 60 60 118-60 15-70 50-50 25-25 8z" fill="#d973b8" stroke="#c957c2" stroke-width="5"/>
            <path d="M20 640l45-12 40 20 40 55 35 80-50 10-65 40-45 15M20 670l60-5 50 80-60 60-50 20" fill="none" stroke="#c4519f" stroke-width="3"/>
            <path d="M20 655l45-10 75 90-70 60-50 15z" fill="#cc6ea6"/>
            <path d="M700 800l108-30 10 60-95 15z" fill="#cb72c8" stroke="#c44fc4" stroke-width="4"/>
            <path d="M292 962l70-30 45 64h-90zM30 170l20 5-15 30-15-10zM75 180l15 5-15 25-15-5z" fill="#c977cf"/>
            <path d="M500 15h60l-15 40-20 85-18-5 5-50 25-50z" fill="#ee72ba" stroke="#cf3ca5" stroke-width="4"/>
            <path d="M15 880l20 10 30 105M60 990l60-5 70-40 30 50" fill="none" stroke="#a82d9b" stroke-width="12"/>
            <!-- footpaths -->
            <g fill="none" stroke="#cfa58b" stroke-width="5" stroke-dasharray="4 12">
              <path d="M270 15q0 60 50 100 40 60 10 180M345 40q40 20 75-20M150 540l60 80 90 150M450 260l-60 110-70 110M20 462h110M240 550l220 440M870 45q20 60 30 80l70 25q90 20 120 80 10 60 80 120l150 170 120 130 80 130 130 180M760 25q100-5 130 60l20 30M210 350q50-30 90-130"/>
            </g>
            <path d="M950 15l215 170 580 465M870 15l310 240 320 270 240 185" fill="none" stroke="#d6ded0" stroke-width="5"/>
            <!-- cadastral outlines -->
            <g fill="none" stroke="#ee6540" stroke-width="4">
              <path d="M20 90l40-75M85 15l-10 35 45 35-5 15 45 25 25-35-25-30 25-10 20-35M165 25l45 15-5 45M200 35l40 30-25 35"/>
              <path d="M335 82l65 45-50 68-65-45zM578 80l55 45-105 125-60-45zM210 135l45 40-45 50-40-45zM20 225l110 75 60 5 20-40 45 20 35-80 5-80-50-35 20-90M90 160l15-15 35 20-10 15z"/>
              <path d="M410 20l50 35 30 35 30-15M20 330l50 20 25 28H20M75 350l65 100-15 75 40 3 30 50 110 240L20 965M165 535L20 545M330 495l-10-30 40-55-15-25 55-70 50-50 110-10M560 85l-40-10-35-12-25 32"/>
              <path d="M40 990l90-35 180-140M160 540l280 455M230 950l130-95 75 140M525 940l20 55M330 520l115 225M810 770l35 150-60 15 10 50-30 10"/>
              <path d="M950 160l70 50 25 45 20 65M870 145l60 30M740 90l35-20 50 60 75 20M1115 150l300 300M1425 660l250 310 20 25M1350 690l-20 55 30 10 190 240M1330 745l-50 130 12 10-35 105-60-5-60 10M1355 560l15-15 20 12-20 15zM1250 470l50 45M1140 690l155-30"/>
              <circle cx="387" cy="312" r="8"/>
            </g>
            <g fill="none" stroke="#b7399c" stroke-width="4">
              <path d="M485 15l-45 130-95 150-85 145M20 255l80 35 70 70 75 80 80 145 110 190 50 120 40 90M245 440l-60 50-160 15M325 580l60 80 60 170 95 165M345 590l60 110 50 100 60 120M270 755h50l80-45M290 805l140-30M325 850l110-55M490 915l45-20M100 290l20-35M555 225l80-25 55-90 80-50"/>
            </g>
            <path d="M160 370q30 20 70 10l90-60 120-130 80-120" fill="none" stroke="#b99d96" stroke-width="4"/>
            <!-- quarter boundaries -->
            <path d="M1555 15l60 55 125 70" fill="none" stroke="#fff" stroke-width="32"/>
            <g fill="none" stroke="#d40606" stroke-width="11" stroke-linejoin="round">
              <path d="M720 15l55 47 55 48 70 22 70 7 90 6 48-3 35 9 17-17 228 250 65 58-40 47-3 37 43 40 60-9 45 17 25 30 20 65 45 100 80 80 45 55 5 91"/>
              <path d="M775 62l-35 25-25 10-120 120-85 100-5 23-175 158-102-4-210 15"/>
              <path d="M15 272l75 38 72 65 66 120 72 135 85 160 117 210"/>
              <path d="M1555 15l60 55 125 70" stroke-width="20"/>
            </g>
            <!-- selected parcel -->
            <path d="M330 500l175-160 7-22 88-100 120-121 70 63 50 28 75 17 150 120 165 130 70 75 7 20 10-2 38 52 45 32 25 26-43 34-30-12-57-23-175 33-180 40-135 38-115 25-140 120z" fill="#e8c828" stroke="#a8187e" stroke-width="6"/>
            <g class="map-text">
              <text x="18" y="764" font-size="40" fill="#555" class="white">513</text>
              <text x="40" y="965" font-size="36" fill="#8c7b80" class="no-halo">Сити-фарм</text>
              <text x="768" y="526" font-size="40" fill="#6a4080" class="violet">146</text>
              <text x="917" y="828" font-size="52" fill="#c8403f">206201</text>
              <g fill="#8f807c" font-size="54">
                <text x="895" y="866">Реконструкция</text>
                <text x="898" y="934">зданий завода</text>
                <text x="910" y="1004">им. Калинина</text>
              </g>
            </g>
          </svg>
          <div class="badge b2">2</div>
        </div>

        <div class="dock-title attr-title"><h2>Земельные участки — Features Total: 2, Filtered: 2, Selected: 1</h2><button aria-label="Открепить"><svg><use href="#float"/></svg></button><button aria-label="Закрыть панель"><svg><use href="#close"/></svg></button></div>
        <div class="attr-tools">
          <button aria-label="Редактировать"><svg><use href="#pencil"/></svg></button>
          <button aria-label="Мультиредактирование" disabled><svg><use href="#tabedit"/></svg></button>
          <button aria-label="Сохранить правки" disabled><svg><use href="#savee"/></svg></button>
          <i class="sep"></i>
          <button class="has-arrow off" aria-label="Добавить объект"><svg><use href="#tabadd"/></svg></button>
          <button aria-label="Удалить" disabled><svg><use href="#trash"/></svg></button>
          <button aria-label="Вырезать" disabled><svg><use href="#cut"/></svg></button>
          <button aria-label="Копировать"><svg><use href="#copy"/></svg></button>
          <button aria-label="Вставить" disabled><svg><use href="#paste"/></svg></button>
          <i class="sep"></i>
          <button aria-label="Выделить по выражению"><svg><use href="#eps"/></svg></button>
          <button aria-label="Выделить всё"><svg><use href="#selall"/></svg></button>
          <button aria-label="Обратить выделение"><svg><use href="#invert"/></svg></button>
          <button aria-label="Снять выделение"><svg><use href="#desel"/></svg></button>
          <button aria-label="Фильтр"><svg><use href="#filter"/></svg></button>
          <button aria-label="Выделенное наверх"><svg><use href="#totop"/></svg></button>
          <button class="more">»</button>
        </div>
        <div class="attr-table">
          <table>
            <colgroup><col class="c0"><col class="c1"><col class="c2"><col class="c3"><col class="c4"></colgroup>
            <thead><tr><th></th><th><div>Вид объекта недвижимости</div></th><th><div>Вид земельного участка</div></th><th><div>Дата присвоения</div></th><th><div>Кадастровый номер</div></th></tr></thead>
            <tbody>
              <tr class="selected"><th>1</th><td class="focus">Земельный участок</td><td>Землепользование</td><td>2017-12-06</td><td>78:06:0206201:146</td></tr>
              <tr><th>2</th><td>Земельный участок</td><td>Землепользование</td><td>2015-04-30</td><td>78:06:0206201:1</td></tr>
            </tbody>
          </table>
        </div>
        <div class="hscroll"><button class="arrow left" aria-label="Влево"></button><div class="bar short-bar"></div><div class="track"></div><button class="arrow right" aria-label="Вправо"></button></div>
        <div class="attr-foot">
          <button class="all has-arrow"><svg><use href="#table"/></svg>Все объекты</button>
          <button class="view" aria-label="Форма"><svg><use href="#formv"/></svg></button>
          <button class="view on" aria-label="Таблица"><svg><use href="#table"/></svg></button>
        </div>
      </section>

      <section class="dock search-panel">
        <div class="dock-title"><h2>Панель поиска Rosreestr Tools</h2><button aria-label="Открепить"><svg><use href="#float"/></svg></button><button aria-label="Закрыть панель"><svg><use href="#close"/></svg></button></div>
        <div class="result-bar">
          <button class="box" aria-label="Назад"><svg><use href="#back"/></svg></button>
          <select aria-label="Результат"><option>[1/1] Земельный участок: 78:06:0206201:1</option></select>
          <button class="box has-arrow" aria-label="Меню"><svg><use href="#burger"/></svg></button>
        </div>
        <div class="result">
          <div class="result-view">
            <table>
              <thead><tr><th>Параметр</th><th class="bold">Значение</th></tr></thead>
              <tbody>
                <tr><td>Вид объекта недвижимости</td><td class="sel">Земельный участок</td></tr>
                <tr><td>Вид земельного участка</td><td>Землепользование</td></tr>
                <tr><td>Дата присвоения</td><td>06.12.2017</td></tr>
                <tr><td>Кадастровый номер</td><td>78:06:0206201:146</td></tr>
                <tr><td>Кадастровый квартал</td><td>78:06:0206201</td></tr>
                <tr><td>Адрес</td><td>Российская ...</td></tr>
                <tr><td>Площадь уточненная</td><td>38 638 м²</td></tr>
                <tr><td>Площадь декларированная</td><td>-</td></tr>
                <tr><td>Площадь</td><td>-</td></tr>
                <tr><td>Статус</td><td>Учтенный</td></tr>
                <tr><td>Категория земель</td><td>Земли населенных ...</td></tr>
                <tr><td></td><td></td></tr>
              </tbody>
            </table>
          </div>
          <div class="vscroll"><button class="arrow up" aria-label="Вверх"></button><div class="bar"></div><div class="track"></div><button class="arrow dn" aria-label="Вниз"></button></div>
        </div>
        <div class="badge b4">4</div>
      </section>
    </main>

    <footer class="status">
      <div class="locator"><svg><use href="#search"/></svg><input type="text" placeholder="Искать (Ctrl+K)" aria-label="Искать"></div>
      <label class="cut-label" for="coord">ц</label>
      <input class="field coord" id="coord" type="text" value="3370203  8388844">
      <button class="ico" aria-label="Переключить охват"><svg><use href="#bug"/></svg></button>
      <label class="cut-label" for="scale">ш</label>
      <select class="field scale" id="scale"><option>1:10115</option></select>
      <button class="ico" aria-label="Заблокировать масштаб"><svg><use href="#lock"/></svg></button>
      <label class="cut-label" for="zoom">п</label>
      <div class="spin"><input id="zoom" type="text" value="100%"><div><button class="arrow up" aria-label="Больше"></button><button class="arrow dn" aria-label="Меньше"></button></div></div>
      <label class="cut-label" for="rot">с</label>
      <div class="spin"><input id="rot" type="text" value="0,0 °"><div><button class="arrow up" aria-label="Больше"></button><button class="arrow dn" aria-label="Меньше"></button></div></div>
      <label class="render"><input type="checkbox" checked>Отрисовка</label>
      <button class="crs"><svg><use href="#crs"/></svg>EPSG:3857</button>
      <button class="ico bubble" aria-label="Сообщения"><svg><use href="#bubble"/></svg></button>
    </footer>
  </div>
</body>
</html>
```
FILE: styles.css
```css
* { box-sizing: border-box; }
body {
  margin: 0;
  background: #efefef;
  color: #111;
  font: 17px/24px "Noto Sans", "Open Sans", sans-serif;
}
button, input, select { font: inherit; color: inherit; margin: 0; }
button {
  border: none;
  background: none;
  padding: 0;
  display: flex;
  align-items: center;
  justify-content: center;
  position: relative;
  flex: none;
}
h1, h2 { font-size: 17px; font-weight: normal; margin: 0; white-space: nowrap; }
.sprite { position: absolute; width: 0; height: 0; }

.window {
  height: 100vh;
  display: flex;
  flex-direction: column;
  border: 1px solid #3b5f7c;
  border-right-color: #9a9a9a;
  overflow: hidden;
}

/* title and menu */
.titlebar {
  height: 44px;
  background: #fff;
  display: flex;
  align-items: center;
  gap: 6px;
  padding-left: 11px;
  flex: none;
}
.logo { width: 24px; height: 24px; }
.titlebar h1 { font-size: 16px; }
.win-buttons { margin-left: auto; display: flex; }
.win-buttons button { width: 70px; height: 44px; }
.win-buttons svg { width: 16px; height: 16px; fill: none; stroke: #222; }
.menu {
  display: flex;
  gap: 22px;
  height: 32px;
  padding-left: 16px;
  border-bottom: 2px solid #d4d4d4;
  flex: none;
}

/* toolbars */
.toolbar {
  display: grid;
  height: 58px;
  flex: none;
  background: linear-gradient(#fafafa, #ededed);
}
.toolbar.first { grid-template-columns: minmax(0, 320fr) minmax(0, 816fr) minmax(0, 188fr) minmax(0, 92fr); }
.toolbar.second {
  height: 59px;
  grid-template-columns:
    minmax(0, 665fr) minmax(0, 93fr) minmax(0, 74fr) minmax(0, 74fr)
    minmax(0, 25fr) minmax(0, 75fr) minmax(0, 74fr) minmax(0, 336fr);
}
.group {
  display: flex;
  align-items: center;
  justify-content: space-between;
  border-bottom: 2px solid #b8b8b8;
  border-right: 1px solid #eee;
  padding: 0 9px 0 8px;
}
.group.tight { padding-right: 3px; }
.toolbar button { width: 36px; height: 36px; }
.toolbar svg { width: 36px; height: 36px; }
.grip {
  width: 7px;
  height: 24px;
  flex: none;
  background: radial-gradient(circle, #b8b8b8 1px, transparent 1px) 0 0 / 4px 5px;
}
.toolbar .more, .attr-tools .more { width: 16px; font-size: 23px; color: #444; }
.toolbar .drop { width: 12px; }
.toolbar .last { margin-left: 36px; }
.g-ros { justify-content: flex-start; gap: 13px; }
.pressed-set { display: flex; gap: 1px; margin-left: -6px; }
.toolbar .pressed {
  width: 48px;
  height: 46px;
  border: 1px solid #a8a8a8;
  border-radius: 3px;
  background: #dcdcdc;
}
.toolbar .pressed.drop { width: 17px; }

button:disabled svg, .off svg { opacity: .35; filter: grayscale(.6); }
.drop::after, .has-arrow::after {
  content: "";
  border: 5px solid transparent;
  border-top: 6px solid #555;
  border-bottom: 0;
}
.drop:disabled::after, .off::after { opacity: .6; }
.has-arrow::after {
  position: absolute;
  right: 0;
  bottom: 0;
  border-width: 5px 4px 0;
}

/* main columns */
.main {
  flex: 1;
  min-height: 0;
  display: grid;
  grid-template-columns: 348fr 576fr 492fr;
}
.dock, .center { position: relative; display: flex; flex-direction: column; min-width: 0; min-height: 0; }
.dock-title { display: flex; align-items: center; gap: 3px; height: 30px; flex: none; }
.dock-title h2 { flex: 1; overflow: hidden; }
.dock-title svg { width: 18px; height: 18px; }
.layers .dock-title { padding: 0 10px 0 6px; }
.layer-tools {
  display: flex;
  align-items: center;
  gap: 14px;
  height: 42px;
  padding-left: 12px;
  flex: none;
}
.layer-tools svg { width: 24px; height: 24px; }
.split { display: flex; gap: 1px; margin: 0 -6px 0 -8px; }
.split button { width: 36px; height: 34px; border: 1px solid #b0b0b0; border-radius: 3px; background: #dcdcdc; }
.split .drop { width: 17px; background: #fbfbfb; }

.tree { flex: 1; min-height: 0; overflow: hidden; background: #fff; margin: 4px 9px 0 2px; }
.node { display: flex; align-items: center; height: 27px; padding: 0 6px 0 9px; overflow: hidden; }
.node label { font-weight: bold; white-space: nowrap; flex: 1; margin-left: 8px; min-width: 0; }
.node.current { background: #efefef; }
.node.current label { text-decoration: underline; text-underline-offset: 3px; }
.tri { width: 12px; margin-right: 14px; flex: none; }
.tri.down::before, .tri.right::before { content: ""; display: block; width: 0; border: 6px solid transparent; }
.tri.down::before { border-top: 6px solid #555; border-bottom: 0; }
.tri.right::before { border-left: 6px solid #555; border-right: 0; margin-left: 4px; }
input[type="checkbox"] {
  appearance: none;
  width: 20px;
  height: 20px;
  flex: none;
  border: 2px solid #c4c4c4;
  background: #fff;
  display: grid;
  place-items: center;
}
input[type="checkbox"]:checked::after {
  content: "";
  width: 8px;
  height: 14px;
  border: solid #111;
  border-width: 0 3px 3px 0;
  transform: rotate(35deg);
}
.thumb { width: 20px; height: 20px; margin: 0 2px 0 12px; flex: none; }
.thumb.wide { width: 26px; height: 24px; margin: 0 -1px 0 9px; }
.thumb.outline { width: 24px; height: 24px; margin: 0 0 0 10px; border: 1px solid #e8434a; }
.mem { width: 25px; height: 24px; border: 1px solid #ddd; background: #f4f4f4; }
.mem svg { width: 20px; height: 20px; }

/* scrollbars */
.hscroll { display: flex; height: 21px; flex: none; background: #e4e4e4; border: solid #b8b8b8; border-width: 1px 0; }
.layers .hscroll { margin: 0 9px 0 2px; }
.arrow { width: 20px; background: #fafafa; }
.hscroll .bar { background: linear-gradient(#fff, #efefef); border: solid #c4c4c4; border-width: 0 1px; }
.wide-bar { width: 78%; }
.short-bar { width: 17%; }
.hscroll .track { flex: 1; }
.arrow::before { content: ""; border: 6px solid transparent; }
.arrow.left::before { border-right: 6px solid #444; border-left: 0; }
.arrow.right::before { border-left: 6px solid #444; border-right: 0; }
.arrow.up::before { border-bottom: 6px solid #444; border-top: 0; }
.arrow.dn::before { border-top: 6px solid #444; border-bottom: 0; }

.tabs { display: flex; height: 37px; margin: 1px 9px 0 2px; border-top: 2px solid #b8b8b8; align-items: flex-start; font-size: 16px; flex: none; }
.tabs button { width: 97px; height: 31px; background: #dadada; border: 1px solid #b8b8b8; border-top: 0; border-radius: 0 0 3px 3px; }
.tabs .active { width: 73px; height: 36px; background: #f4f4f4; margin-top: -2px; }

/* numbered callouts lying over the panels */
.badge {
  position: absolute;
  z-index: 3;
  width: 58px;
  height: 80px;
  background: rgba(60, 60, 60, .84);
  color: #fff;
  font-size: 36px;
  line-height: 78px;
  text-align: center;
}
.b1 { left: 135px; top: -2px; }
.b2 { left: 212px; top: 66px; }
.b3 { left: 282px; top: 424px; }
.b4 { left: 9px; top: 31px; }
.highlight { position: absolute; z-index: 2; left: -1px; top: 96px; width: 349px; height: 41px; border: 5px solid #d25045; border-radius: 3px; }

/* map */
.map { position: relative; height: 329px; border: 1px solid #b8b8b8; flex: none; }
.map > svg { display: block; width: 100%; height: 100%; }
.map-text text { paint-order: stroke; stroke: #f5e8e4; stroke-width: 12px; stroke-linejoin: round; }
.map-text .violet { stroke: #e2c0ea; stroke-width: 16px; }
.map-text .white { stroke: #fff; stroke-width: 16px; }
.map-text .no-halo { stroke: none; }

/* attribute table */
.attr-title { padding: 10px 1px 0 11px; height: 40px; }
.attr-tools { display: flex; align-items: center; justify-content: space-between; height: 44px; padding: 0 4px 0 12px; flex: none; }
.attr-tools svg { width: 23px; height: 23px; }
.sep { width: 1px; height: 17px; background: #ccc; }
.attr-table { flex: 1; min-height: 0; overflow: hidden; background: linear-gradient(90deg, #efefef 17px, #fff 17px); border-left: 1px solid #c4c4c4; }
table { border-collapse: collapse; table-layout: fixed; }
th { font-weight: normal; background: linear-gradient(#fcfcfc, #ededed); }
th, td { border: 1px solid #c6c6c6; padding: 0 4px; white-space: nowrap; overflow: hidden; }
td { text-align: left; }
.attr-table table { width: 684px; }
.attr-table thead th { height: 30px; border-top: 0; border-bottom: 2px solid #b8b8b8; padding: 3px 2px 0; }
.attr-table thead div { display: flex; justify-content: center; overflow: hidden; }
.attr-table tbody tr { height: 45px; }
.attr-table tbody th { padding: 0; border-left: 0; }
.attr-table tbody td { background: #e7e6e2; }
.attr-table .selected td { background: #0078d7; color: #e4f0fb; }
.attr-table .selected .focus { outline: 3px solid #0cf57c; outline-offset: -3px; background: #1683dc; }
.c0 { width: 17px; }
.c1 { width: 184px; }
.c2 { width: 211px; }
.c3 { width: 150px; }
.c4 { width: 122px; }
.attr-foot { display: flex; align-items: center; gap: 2px; height: 45px; padding: 0 3px 0 5px; flex: none; }
.attr-foot svg { width: 21px; height: 21px; }
.all { width: 145px; height: 34px; gap: 4px; font-size: 16px; margin-right: auto; justify-content: flex-start; padding-left: 5px; border: 1px solid #b0b0b0; border-radius: 3px; background: linear-gradient(#fff, #eee); }
.all::after { right: 3px; bottom: 4px; }
.view { width: 36px; height: 34px; }
.view.on { border: 1px solid #aaa; border-radius: 3px; background: #dadada; }

/* search results */
.search-panel { padding: 0 14px 15px 24px; }
.search-panel .dock-title { margin: 0 -12px 0 -9px; }
.result-bar { display: flex; align-items: center; gap: 9px; height: 56px; flex: none; }
.box { width: 36px; height: 35px; border: 1px solid #b0b0b0; border-radius: 3px; background: linear-gradient(#fff, #f0f0f0); }
.box svg { width: 22px; height: 22px; }
select {
  appearance: none;
  min-width: 0;
  border: 1px solid #b0b0b0;
  border-radius: 3px;
  background:
    linear-gradient(45deg, transparent 50%, #555 50%) right 16px center / 6px 6px no-repeat,
    linear-gradient(-45deg, transparent 50%, #555 50%) right 10px center / 6px 6px no-repeat,
    linear-gradient(#fff, #efefef);
}
.result-bar select { flex: 1; height: 34px; padding: 0 24px 0 6px; font-size: 16px; }
.result { flex: 1; min-height: 0; display: flex; border: 1px solid #b8b8b8; border-left: 0; }
.result-view { flex: 1; min-width: 0; overflow: hidden; }
.result table { width: 100%; }
.result thead th { height: 30px; border-top: 0; border-bottom: 2px solid #b8b8b8; padding-top: 3px; }
.result thead th:first-child { width: 57%; }
.result .bold { font-weight: bold; }
.result tbody tr { height: 45px; background: #fff; }
.result tbody tr:nth-child(even) { background: #e7e6e2; }
.result td:first-child, .result th:first-child { border-left: 0; }
.result .sel { background: #0078d7; color: #e4f0fb; }
.vscroll { width: 21px; display: flex; flex-direction: column; background: #e4e4e4; border-left: 1px solid #c4c4c4; }
.vscroll .arrow { height: 20px; width: 20px; }
.vscroll .bar { flex: 362; border: solid #c4c4c4; border-width: 1px 0; background: linear-gradient(90deg, #fff, #efefef); }
.vscroll .track { flex: 132; }

/* status bar */
.status { display: flex; align-items: center; height: 42px; padding: 0 40px 0 7px; flex: none; font-size: 16px; }
.locator { flex: 0 1 300px; height: 33px; display: flex; align-items: center; gap: 10px; padding-left: 12px; border: 1px solid #aaa; border-radius: 3px; background: #fff; margin-right: auto; min-width: 0; }
.locator svg { width: 20px; height: 20px; flex: none; }
.locator input { border: 0; outline: 0; background: none; padding: 0; min-width: 0; flex: 1; }
.locator input::placeholder { color: #888; }
.cut-label { width: 9px; height: 14px; line-height: 14px; font-size: 13px; overflow: hidden; margin-right: 8px; flex: none; }
.field { height: 33px; border: 1px solid #aaa; border-radius: 3px; flex: none; }
.coord { width: 159px; padding: 0 9px; white-space: pre; background: #fff; margin-right: 2px; }
.scale {
  width: 121px;
  padding: 0 5px;
  margin-right: 10px;
  background:
    linear-gradient(45deg, transparent 50%, #555 50%) right 16px center / 6px 6px no-repeat,
    linear-gradient(-45deg, transparent 50%, #555 50%) right 10px center / 6px 6px no-repeat,
    linear-gradient(90deg, #c4c4c4 1px, #f8f8f8 1px) right / 31px 100% no-repeat,
    #fff;
}
.ico { width: 34px; height: 30px; }
.ico svg { width: 24px; height: 24px; }
.coord + .ico { margin-right: 8px; }
.spin { display: flex; width: 125px; height: 31px; border: 1px solid #aaa; border-radius: 3px; background: #fff; margin-right: 18px; flex: none; }
.spin input { flex: 1; min-width: 0; border: 0; outline: 0; background: none; padding: 0 6px; }
.spin > div { display: grid; border-left: 1px solid #ccc; }
.render { display: flex; align-items: center; gap: 7px; margin-left: -7px; }
.crs { margin-left: 22px; gap: 3px; }
.crs svg { width: 24px; height: 24px; }
.ico.bubble { margin-left: 29px; }
.ico.bubble svg { width: 27px; height: 27px; }
```
